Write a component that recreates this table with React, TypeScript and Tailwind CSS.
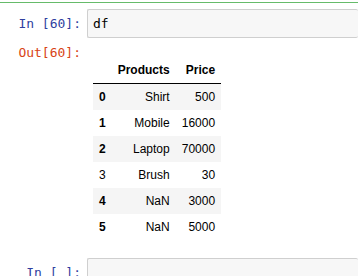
import React from "react";

const rows = [
  { idx: "0", product: "Shirt", price: "500", bold: true },
  { idx: "1", product: "Mobile", price: "16000", bold: true },
  { idx: "2", product: "Laptop", price: "70000", bold: true },
  { idx: "3", product: "Brush", price: "30", bold: false },
  { idx: "4", product: "NaN", price: "3000", bold: true },
  { idx: "5", product: "NaN", price: "5000", bold: true },
];

const mono = "font-['DejaVu_Sans_Mono',monospace] text-[13px]";

const Prompt = ({ text, out }: { text: string; out?: boolean }) => (
  <div
    className={`w-[87px] shrink-0 pr-[6px] text-right whitespace-pre ${mono} ${
      out ? "text-[#D84315]" : "text-[#303F9F]"
    }`}
  >
    {text}
  </div>
);

export default function App() {
  return (
    <div className="w-[358px] h-[276px] overflow-hidden bg-white">
      {/* selected cell */}
      <div className="mt-[2px] border-t border-[#66BB6A] pt-[6px]">
        <div className="flex items-center">
          <Prompt text="In [60]:" />
          <div
            className={`flex-1 h-[29px] flex items-center pl-[5px] bg-[#f7f7f7] border border-[#cfcfcf] rounded-[2px] border-r-0 text-black ${mono}`}
          >
            df
          </div>
        </div>

        {/* output */}
        <div className="flex mt-[6px]">
          <div className="leading-[18px]">
            <Prompt text="Out[60]:" out />
          </div>
          <div className="pt-[13px] pl-[6px]">
            <table className="font-['Liberation_Sans',Arial,sans-serif] text-[12px] text-black leading-[14px]">
              <thead>
                <tr className="border-b border-black">
                  <th className="px-[6px] py-[6px]"></th>
                  <th className="px-[6px] py-[6px] text-right font-bold">Products</th>
                  <th className="px-[6px] py-[6px] text-right font-bold">Price</th>
                </tr>
              </thead>
              <tbody>
                {rows.map((r, i) => (
                  <tr key={r.idx} className={i % 2 === 0 ? "bg-[#f5f5f5]" : "bg-white"}>
                    <th
                      className={`px-[6px] py-[6px] text-left ${
                        r.bold ? "font-bold" : "font-normal"
                      }`}
                    >
                      {r.idx}
                    </th>
                    <td className="px-[6px] py-[6px] text-right">{r.product}</td>
                    <td className="px-[6px] py-[6px] text-right">{r.price}</td>
                  </tr>
                ))}
              </tbody>
            </table>
          </div>
        </div>
      </div>

      {/* empty cell */}
      <div className="flex items-center mt-[18px]">
        <Prompt text="In [ ]:" />
        <div className="flex-1 h-[29px] bg-[#f7f7f7] border border-[#cfcfcf] border-r-0 rounded-[2px]"></div>
      </div>
    </div>
  );
}
